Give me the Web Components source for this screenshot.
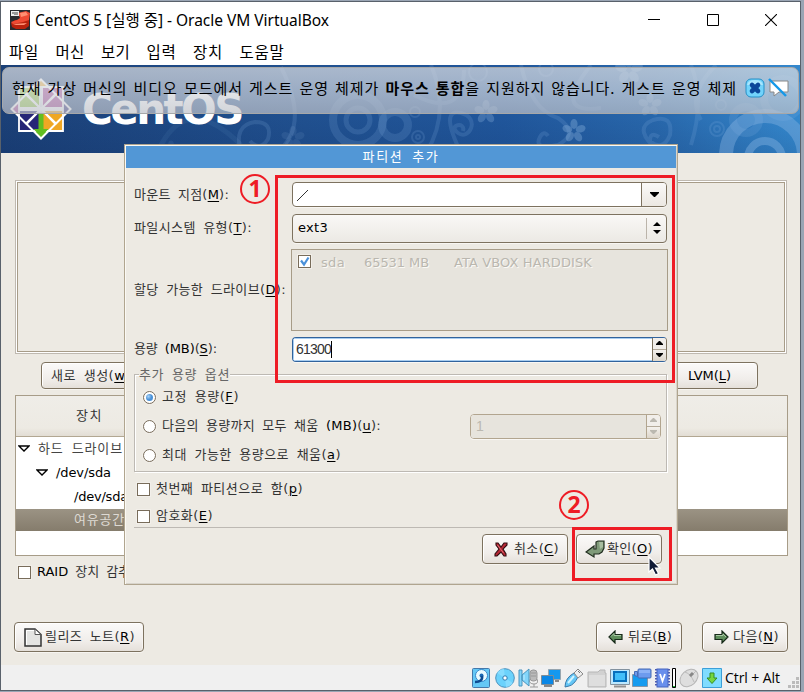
<!DOCTYPE html>
<html lang="ko"><head><meta charset="utf-8"><title>CentOS 5 [실행 중] - Oracle VM VirtualBox</title>
<style>html,body{margin:0;height:692px;overflow:hidden;background:#9aa5b4}body{font-family:"DejaVu Sans","Noto Sans CJK KR",sans-serif;font-size:13px}</style></head><body>
<vm-window></vm-window>
<script>
const define=(name,html,setup)=>customElements.define(name,class extends HTMLElement{
 constructor(){super();this.attachShadow({mode:'open'}).innerHTML=html}
 connectedCallback(){if(setup)setup(this,this.shadowRoot)}
});
/* One line of text whose tracking is adjusted to a given width */
define('fit-text','<style>:host{display:block;white-space:nowrap;line-height:20px;flex:none}span{display:inline-block;word-spacing:var(--ws,3px)}::slotted(u){color:var(--key,#000);text-underline-offset:2px}</style><span><slot></slot></span>',(h,r)=>{
 const w=+h.getAttribute('w'),s=r.querySelector('span');
 if(w){const n=[...h.textContent].length,d=(w-s.getBoundingClientRect().width)/n;s.style.letterSpacing=d+'px';h.style.width=w+'px'}
});
const icons={
 app:[20,20,'<path fill="#292b30" d="M0 0h20v20H0z"/><path fill="#b9220d" d="M1 13l4-3h11l3-1v7l-4 3H6l-4-2z"/><path fill="#ef4b34" d="M8 3l8-2 4 2-1 7-6 2-10 2-2-2 6-2 3-2z"/><path fill="#ff8f72" d="M10 3l6-1 2 3-7 2zM3 14l14-1-3 2H6z"/><path fill="#eee" d="M1 1h8v5H1z"/><path stroke="#444" d="M2 3h2M5 2v3M7 2v3"/>'],
 min:[12,12,'<path stroke="#000" d="M0 5.5h12"/>'],
 max:[12,12,'<path fill="none" stroke="#000" d="M.5.5h11v11H.5z"/>'],
 close:[12,12,'<path stroke="#000" stroke-width="1.1" d="M0 0l12 12M12 0L0 12"/>'],
 cancel:[20,20,'<rect x="1" y="1" width="18" height="18" rx="5" fill="#72d3fb" stroke="#268fc6"/><path d="M2 7Q3 2 10 2t8 5" fill="#c0efff" opacity=".7"/><path stroke="#0b479a" stroke-width="4.6" stroke-linecap="round" d="M7 7l6 6M13 7l-6 6"/>'],
 nobubble:[21,20,'<path fill="#fff" stroke="#888" d="M2 3h18v11h-9l-5 4v-4H2z"/><path stroke="#1598e8" stroke-width="2.4" d="M1 1l17 17"/>'],
 x:[14,15,'<path fill="#b82936" stroke="#320d12" stroke-width="1.1" d="M2 1h2l3 4 3-4h3v2L9 7l3 5v2h-2l-3-4-4 4H1v-2l4-5-3-4z"/><path fill="none" stroke="#e06b75" d="M3.500 3l6 8"/>'],
 ok:[20,19,'<path fill="#809b7a" stroke="#222e20" stroke-width="1.2" d="M11 2l2-1h6v7l-2 4-3 2H9v3L1 12l8-6v3h2z"/><path fill="#a8bda0" d="M14 2h4v5l-3 2z"/>'],
 page:[18,19,'<path fill="#e4e4e2" stroke="#333" stroke-width="1.5" d="M1 1h10l6 5.500V18H1z"/><path fill="#fff" stroke="#555" d="M11 1v5.500h6z"/><path fill="none" stroke="#fff" d="M2.5 17V2.5H10"/>'],
 back:[15,14,'<path fill="#5f8e5c" stroke="#172919" stroke-width="1.2" d="M1 7l6-6v3.5h7v5H7V13z"/><path stroke="#a8c8a3" d="M3 6.5l3-3v2h7"  fill="none"/>'],
 next:[15,14,'<path fill="#5f8e5c" stroke="#172919" stroke-width="1.2" d="M14 7L8 1v3.500H1v5h7V13z"/><path fill="none" stroke="#a8c8a3" d="M2 5.500h7V4l3 3"/>'],
 tri:[12,8,'<path fill="#fff" stroke="#000" stroke-width="1.3" d="M1 1h10L6 6z"/>'],
 down:[9,5,'<path d="M0 0h9v1L5 5H4L0 1z"/>'],
 updown:[8,12,'<path d="M4 0l4 4H0zM0 8h8l-4 4z"/>'],
 up:[7,4,'<path d="M3 0h1l3 3v1H0V3z" fill="currentColor"/>'],
 dn:[7,4,'<path d="M0 0h7v1L4 4H3L0 1z" fill="currentColor"/>'],
 check:[11,11,'<path fill="none" stroke="#4a90d9" stroke-width="2.2" d="M2 4.5L5 8.5 9.5 1.5"/>'],
 hdd:[18,20,'<rect x=".5" y=".5" width="17" height="19" rx="1" fill="#65c8f6" stroke="#4579aa"/><circle cx="9.5" cy="7.5" r="6" fill="#e9faff" stroke="#3388cc"/><circle cx="9.5" cy="7.5" r="2" fill="#1b69b4"/><path stroke="#0e4b91" stroke-width="2.6" fill="none" d="M10 8q1 6-7 6"/>'],
 cd:[20,20,'<circle cx="10" cy="10" r="9.3" fill="#6bd2fc" stroke="#4b91bd"/><path fill="#86dcff" d="M10 10L2 5Q5 1 9 1zM10 10l8 5q-3 4-7 4z"/><circle cx="10" cy="10" r="2.200" fill="#fff" stroke="#2978b0"/>'],
 audio:[20,20,'<rect x="12" y="2" width="7" height="11" rx="3" fill="#bbb" stroke="#999"/><path fill="none" stroke="#999" d="M11 11q0 5 5 5t3-5M16 16v3M12 19h8M13 5h5M13 8h5"/><path fill="#82d5fa" stroke="#4a94bd" d="M1 2h3v16H1zM4 7l7-6v17l-7-6z"/><path stroke="#c1edff" d="M6 7v5"/>'],
 net:[20,20,'<path fill="#1598ef" stroke="#96a5af" d="M7.5 1.5h12v10h-12z"/><path fill="#0a87e6" stroke="#7e8c96" d="M.5 7.500h12v9H.5z"/><path stroke="#888" stroke-width="2" d="M3 18h8M14 13h4"/>'],
 usb:[20,20,'<path fill="#64c6f6" stroke="#3a79a8" d="M1 19q0-9 9-14l4 4q-4 8-9 9z"/><path stroke="#d2f4ff" stroke-width="2" d="M4 15l6-7"/><path fill="#eee" stroke="#888" d="M10 5l4-4 5 5-5 4z"/><path stroke="#777" d="M14 3l2 2"/>'],
 folder:[20,20,'<path fill="#d1d1d1" stroke="#b7b7b7" d="M1 4h10l2-2h5v3h1v14H1z"/><path fill="#dedede" d="M2 7h16v11H2z"/>'],
 display:[20,20,'<path fill="#bce8ff" stroke="#83929e" d="M.5 1.500h19v15H.5z"/><path fill="#42bff9" stroke="#0870bc" stroke-width="2" d="M4 4h12v9H4z"/><path stroke="#929292" stroke-width="2" d="M4 18.500h12"/>'],
 record:[20,20,'<path fill="#159bef" stroke="#8497a8" d="M.5 6.500h15v12H.5z"/><rect x="6" y="1" width="13" height="9" rx="1" fill="#6d9bee" stroke="#476bb4"/><path fill="#8cb2f6" d="M7 2h11v3H7z"/><path fill="#6d9bee" stroke="#476bb4" d="M2.500 3.500h3v5l-3-1z"/>'],
 chip:[15,20,'<path stroke="#4e5bb0" stroke-dasharray="1.500 1.500" d="M1 1v18M14 1v18" stroke-width="2"/><rect x="2" y="1" width="11" height="18" fill="#698fec" stroke="#4764be"/><path fill="none" stroke="#fff" stroke-width="1.800" d="M5 6l2.500 7L10 6"/>'],
 meter:[4,20,'<path fill="#fff" stroke="#000" d="M.5.5h3v19h-3z"/><path fill="#17b833" d="M1 18h2v1H1z"/>'],
 mouse:[20,20,'<ellipse cx="10" cy="10" rx="7.500" ry="10" transform="rotate(48 10 10)" fill="#dedede" stroke="#b5b5b5"/><path fill="none" stroke="#bbb" d="M6 4q6 2 9 10M11 9l6-6"/><path stroke="#888" stroke-width="3" d="M11 8l3-3"/>'],
 host:[20,20,'<path fill="#80dcff" stroke="#3c9fd8" d="M.5.5h19v19H.5z"/><path fill="#75d63e" stroke="#328e23" d="M8 5h4v5h3l-5 5.500L5 10h3z"/>'],
 grip:[11,11,'<path fill="#bbb" d="M8 0h3v3H8zM4 4h3v3H4zM8 4h3v3H8zM0 8h3v3H0zM4 8h3v3H4zM8 8h3v3H8z"/>'],
 cursor:[13,20,'<path fill="#101a35" stroke="#fff" stroke-width="1.200" d="M1 1v15l3.500-3 3 6 3-1.500-3-5.500H12z"/>'],
 logo:[62,62,'<path fill="#efa724" d="M31 1l9 9H22z"/><path fill="#a13a8f" d="M1 31l9-9v18z"/><path fill="#262577" d="M61 31l-9-9v18z"/><path fill="#62be21" d="M31 61l9-9H22z"/><g stroke="#fff" stroke-width="1.800"><path fill="#91c73e" d="M9 9h21v21H9z"/><path fill="#a13a8f" d="M32 9h21v21H32z"/><path fill="#262577" d="M9 32h21v21H9z"/><path fill="#efa724" d="M32 32h21v21H32z"/></g><path fill="#62be21" d="M28.500 35h5v16h5L31 59l-7.500-8h5z"/><path fill="none" stroke="#fff" stroke-width="2" d="M31 1.500L45.500 16 31 31 16.500 16zM31 31l14.500 15L31 60.500 16.500 46zM1.500 31L16 16.500 31 31 16 45.500zM31 31l15-14.500L60.500 31 46 45.500z"/>']
};
define('ui-icon','<style>:host{display:block;flex:none;line-height:0}svg{display:block}</style>',(h,r)=>{const [w,ht,s]=icons[h.getAttribute('name')];r.innerHTML+=`<svg width="${w}" height="${ht}" viewBox="0 0 ${w} ${ht}">${s}</svg>`});
define('gtk-button',`<style>:host{display:flex;box-sizing:border-box;align-items:center;border:1px solid #7d725f;border-radius:4px;background:linear-gradient(#fbfaf9,#f0edea 65%,#e5e0da);box-shadow:inset 1px 1px #fff,inset -1px 0 #f6f4f1,0 1px #f7f5f1;color:#333;height:30px;overflow:hidden;flex:none}</style><slot></slot>`);
define('gtk-toggle',`<style>:host{display:flex;align-items:center;height:20px;gap:6px;color:#333}i{display:flex;align-items:center;justify-content:center;box-sizing:border-box;width:13px;height:13px;border:1px solid #786c5a;background:#fff;flex:none;box-shadow:0 0 0 1px #f2efea}:host([radio]) i{border-radius:50%}:host([radio][on]) i:after{content:"";width:7px;height:7px;border-radius:50%;background:radial-gradient(circle at 35% 35%,#a7d2f7,#4b92d8 50%)}</style><i></i><slot></slot>`,(h,r)=>{if(h.hasAttribute('on')&&!h.hasAttribute('radio'))r.querySelector('i').innerHTML='<ui-icon name="check"></ui-icon>'});
define('gtk-spin',`<style>:host{display:flex;box-sizing:border-box;height:25px;border:1px solid #31639c;border-right-color:#7d725f;border-radius:4px;background:#fff;box-shadow:0 1px #f9f7f4;overflow:hidden}.f{flex:1;display:flex;align-items:center;padding-left:3px;box-shadow:inset 1px 1px #a8cdf0,inset 0 -1px #a8cdf0;font-family:"Liberation Sans",sans-serif;font-size:14px;color:#333}.b{width:13px;border-left:1px solid #7d725f;background:#f1eeea;display:grid;grid-template-rows:1fr 1fr}.b span{display:flex;align-items:center;justify-content:center}.b span+span{border-top:1px solid #b4aa9a;background:linear-gradient(#f4f1ed,#ddd6cb)}:host([off]){border-color:#b2a58f;color:#bbb8b0}:host([off]) .f{background:#e7e4dd;box-shadow:none;color:#bbb8b0}:host([off]) .b{border-color:#b2a58f}</style><div class="f"><slot></slot></div><div class="b"><span><ui-icon name="up"></ui-icon></span><span><ui-icon name="dn"></ui-icon></span></div>`);
define('title-bar',`<style>:host{display:flex;height:36px;align-items:center;background:#fff;padding-left:9px;font:15.500px "Noto Sans","Noto Sans CJK KR",sans-serif;color:#000}fit-text{margin-left:5px;flex:1}nav{display:flex;gap:46.500px;margin-right:23px;align-items:center}</style><ui-icon name="app"></ui-icon><fit-text w="294" style="--ws:0px">CentOS 5 [실행 중] - Oracle VM VirtualBox</fit-text><nav><ui-icon name="min"></ui-icon><ui-icon name="max"></ui-icon><ui-icon name="close"></ui-icon></nav>`,(h,r)=>{r.querySelector('fit-text').style.width='auto'});
define('menu-bar',`<style>:host{display:flex;height:27px;align-items:center;background:#fff;padding:0 8px 2px;box-sizing:border-box;gap:16.500px;font:15.500px "Noto Sans CJK KR",sans-serif;color:#000}</style><fit-text w="30">파일</fit-text><fit-text w="29">머신</fit-text><fit-text w="29">보기</fit-text><fit-text w="30">입력</fit-text><fit-text w="30">장치</fit-text><fit-text w="45">도움말</fit-text>`);
define('distro-banner',`<style>:host{display:block;height:88px;position:relative;overflow:hidden;background:linear-gradient(#0000 60%,#0a205022),linear-gradient(90deg,#1b4077,#20508f 38%,#20569b 63%,#2867ab 82%,#3488cd)}.bg{display:block;position:absolute;inset:0}.brand{position:relative;display:flex;padding:13px 0 0 9px}.brand fit-text{margin:7px 0 0 10px;font:bold 42px/50px "DejaVu Sans",sans-serif;color:#fff;line-height:50px}</style>
<svg class="bg" width="799" height="88" viewBox="0 65 799 88" fill="none" stroke="#8db9e5" stroke-opacity=".17" stroke-width="5">
<g stroke-width="8"><circle cx="357" cy="120" r="25"/><circle cx="357" cy="120" r="12" stroke-width="5"/><circle cx="394" cy="125" r="13"/><circle cx="745" cy="120" r="13"/><circle cx="782" cy="98" r="19"/><circle cx="764" cy="155" r="39" stroke-opacity=".38" stroke-width="14"/><circle cx="764" cy="158" r="17" stroke-opacity=".4"/></g>
<path d="M430 65q20 48-5 88M460 153q-22-45 0-40c20 5 8 28-3 20s8-12 5-2M463 70q-1 50-50 25M520 65q10 45 37 53 22 15 0 27-25 5-18-8 4-7 8-1M660 153q-30-24-8-33 20-6 17 15-7 17-20 6 0-10 9-4M690 65q14 35 0 80M715 65q-30 30-15 55M280 67q30 60-5 86M240 153q-8-28 14-31 18 0 13 17-8 13-18 2M590 65q-40 50 10 43" stroke-width="4"/><path d="M160 145q28-52 80 0" stroke-opacity=".08"/><g stroke-width="2"><circle cx="417" cy="137" r="6"/><circle cx="417" cy="137" r="2"/><circle cx="716" cy="129" r="7"/><circle cx="716" cy="129" r="3"/><circle cx="414" cy="112" r="5"/><circle cx="720" cy="105" r="5"/><circle cx="477" cy="72" r="9"/><circle cx="545" cy="69" r="7"/></g>
<g fill="#a3c7ec" stroke="none" id="fl"></g></svg><div class="brand"><ui-icon name="logo"></ui-icon><fit-text w="160" style="--ws:0px">CentOS</fit-text></div>`,(h,r)=>{
 let s='';for(const[x,y,k,o]of[[573,131,1,.3],[485,112,1,.25],[649,105,1,.25],[628,70,1.2,.25],[292,138,1,.1],[170,150,.8,.08]])for(let i=0;i<5;i++)s+=`<ellipse cx="${x}" cy="${y-7*k}" rx="${3.600*k}" ry="${5*k}" fill-opacity="${o}" transform="rotate(${i*72} ${x} ${y})"/>`;r.querySelector('#fl').innerHTML=s});
define('vm-notice',`<style>:host{position:absolute;left:1px;top:2px;width:797px;height:47px;box-sizing:border-box;border:1px solid #a7a8a9;border-radius:7px;background:linear-gradient(#d9dce1bd,#d3d6dcae 55%,#bfc2c9b3);display:flex;align-items:center;padding:0 11px 5px 9px;color:#000;font:15px "Noto Sans CJK KR",sans-serif;--ws:1px}ui-icon{margin-left:8px}ui-icon+ui-icon{margin-left:3px}</style><fit-text w="725">현재 가상 머신의 비디오 모드에서 게스트 운영 체제가 <b>마우스 통합</b>을 지원하지 않습니다. 게스트 운영 체제</fit-text><ui-icon name="cancel"></ui-icon><ui-icon name="nobubble"></ui-icon>`);
define('partition-table',`<style>:host{display:block;box-sizing:border-box;height:161px;border:1px solid #a79c88;background:#fff;color:#000}.h{height:40px;border-bottom:1px solid #b2a792;background:linear-gradient(#efede8,#edeae3 80%,#e2ddd4);display:flex;align-items:center;padding-left:60px;color:#333}.r{display:flex;align-items:center;height:24px;gap:8px;padding-left:2px}.r1{padding-left:20px}.r2{padding-left:58px}.s{height:22px;padding-left:58px;background:linear-gradient(#9b9384,#857c6c);color:#dedad3}</style><div class="h"><fit-text w="27">장치</fit-text></div><div class="r" style="color:#444"><ui-icon name="tri"></ui-icon><fit-text w="85">하드 드라이브</fit-text></div><div class="r r1"><ui-icon name="tri"></ui-icon><fit-text w="55" style="--ws:0px">/dev/sda</fit-text></div><div class="r r2"><fit-text w="62">/dev/sda1</fit-text></div><div class="r s"><fit-text w="51">여유공간</fit-text></div>`);
define('installer-page',`<style>:host{display:block;padding:27px 11px 0 14px;height:484px}.canvas{height:174px;box-sizing:border-box;border:1px solid #bfb9b0;padding:1px;box-shadow:inset 0 0 0 1px #fff;width:772px}.canvas:before{content:"";display:block;height:170px;box-sizing:border-box;border:1px solid #a79c88}.row{display:flex;justify-content:space-between;margin:8px 31px 6px 26px}.row gtk-button{height:27px;padding-left:9px;box-sizing:border-box}partition-table{width:773px}.foot{display:flex;margin:40px 0 0 -1px}.foot gtk-button{width:86px;padding-left:10px}gtk-toggle{margin:6px 0 0 3px}</style>
<div class="canvas"></div><div class="row"><gtk-button style="width:96px"><fit-text w="80">새로 생성(<u>w</u>)</fit-text></gtk-button><gtk-button style="width:98px;padding-left:27px;color:#000"><fit-text w="43">LVM(<u>L</u>)</fit-text></gtk-button></div><partition-table></partition-table><gtk-toggle><fit-text w="105"><span style="color:#000">RAID</span> 장치 감추기</fit-text></gtk-toggle><div class="foot"><gtk-button style="width:130px;padding-left:9px;gap:3px;margin-right:452px"><ui-icon name="page"></ui-icon><fit-text w="90">릴리즈 노트(<u>R</u>)</fit-text></gtk-button><gtk-button style="gap:5px;padding-left:11px;margin-right:20px"><ui-icon name="back"></ui-icon><fit-text w="44">뒤로(<u>B</u>)</fit-text></gtk-button><gtk-button style="gap:4px;padding-left:11px"><ui-icon name="next"></ui-icon><fit-text w="46">다음(<u>N</u>)</fit-text></gtk-button></div>`);
define('partition-dialog',`<style>:host{position:absolute;left:123px;top:79px;width:554px;height:441px;box-sizing:border-box;border:1px solid #b0a58f;background:#edeae3;box-shadow:inset 1px 1px #fbf9f4,inset -1px -1px #d8d4cb;color:#333}header{height:22px;margin:1px;background:#5297d6;color:#fff;display:flex;align-items:center;justify-content:center}.form{display:grid;grid-template-columns:157px 377px;grid-template-rows:25px 29px 82px 25px;row-gap:6px;padding:13px 0 0 9px;align-items:center}.form>*{box-sizing:border-box}.combo{display:flex;margin:0 1px;border:1px solid #7d725f;border-radius:4px;height:25px;background:#fff;box-shadow:0 1px #f8f6f2;overflow:hidden;align-items:center;padding-left:3px;justify-content:space-between}.arrow{align-self:stretch;width:24px;border-left:1px solid #7d725f;background:linear-gradient(#faf9f7,#ece8e2);display:flex;align-items:center;justify-content:center}.menu{height:29px;margin-top:1px;background:linear-gradient(#f9f8f6,#ece9e4);padding-left:5px;color:#000}.menu .arrow{width:19px;border-color:#bbb4aa;background:none;margin:3px 0}.list{height:82px;margin-top:1px;border:1px solid #a79c88;background:#e7e4dd;display:flex;padding:2px 6px;color:#bab7af;text-shadow:1px 1px #faf9f5;align-items:flex-start}.list fit-text{--ws:0px;padding-top:1px}.caret{width:1px;height:17px;background:#000}.opt{height:98px;width:533px;margin:13px 0 0 9px;border:1px solid #bdb9b3;box-shadow:inset 1px 1px #fff,1px 1px #fff;box-sizing:border-box;padding-left:8px}.opt .leg{margin:-10px 0 0 -4px;background:#edeae3;color:#666;display:block}.opt .line{display:flex;justify-content:space-between;height:26px;margin:6px 5px 0 0;align-items:center}.opt>gtk-toggle{margin-top:2px}.checks{margin:7px 0 0 12px;display:grid;gap:7px}.sep{margin:1px 10px 0 9px;border-top:1px solid #bdb9b3;height:6px}.buttons{display:flex;justify-content:flex-end;gap:8px;padding-right:15px}.buttons gtk-button{width:86px}</style>
<header><fit-text w="77">파티션 추가</fit-text></header><div class="form"><fit-text w="95">마운트 지점(<u>M</u>):</fit-text><div class="combo"><svg width="13" height="14"><path d="M1 13L12 2" stroke="#333"/></svg><span class="arrow"><ui-icon name="down"></ui-icon></span></div>
<fit-text w="118" style="padding-top:1px">파일시스템 유형(<u>T</u>):</fit-text><div class="combo menu"><fit-text w="30">ext3</fit-text><span class="arrow"><ui-icon name="updown"></ui-icon></span></div>
<fit-text w="152" style="padding-top:1px">할당 가능한 드라이브(<u>D</u>):</fit-text><div class="list"><gtk-toggle on></gtk-toggle><fit-text w="24" style="margin-left:10px">sda</fit-text><fit-text w="65" style="margin-left:19px">65531 MB</fit-text><fit-text w="138" style="margin-left:25px">ATA VBOX HARDDISK</fit-text></div>
<fit-text w="83" style="padding-top:1px">용량 <span style="color:#000">(MB)</span>(<u>S</u>):</fit-text><gtk-spin style="margin:1px 1px 0;color:#000"><fit-text w="35">61300</fit-text><span class="caret"></span></gtk-spin></div>
<div class="opt"><fit-text class="leg" w="91">추가 용량 옵션</fit-text><gtk-toggle radio on><fit-text w="77">고정 용량(<u>F</u>)</fit-text></gtk-toggle><div class="line"><gtk-toggle radio><fit-text w="219">다음의 용량까지 모두 채움 <span style="color:#000">(MB)</span>(<u>u</u>):</fit-text></gtk-toggle><gtk-spin off style="width:191px"><fit-text style="margin-left:2px">1</fit-text></gtk-spin></div><gtk-toggle radio style="margin-top:6px"><fit-text w="179">최대 가능한 용량으로 채움(<u>a</u>)</fit-text></gtk-toggle></div>
<div class="checks"><gtk-toggle><fit-text w="147">첫번째 파티션으로 함(<u>p</u>)</fit-text></gtk-toggle><gtk-toggle><fit-text w="57">암호화(<u>E</u>)</fit-text></gtk-toggle></div><div class="sep"></div><div class="buttons"><gtk-button style="padding-left:11px;gap:6px"><ui-icon name="x"></ui-icon><fit-text w="45">취소(<u>C</u>)</fit-text></gtk-button><gtk-button style="padding-left:8px;gap:2px"><ui-icon name="ok"></ui-icon><fit-text w="46">확인(<u>O</u>)</fit-text></gtk-button></div>`);
/* Numbered call-outs laid over the guest screen */
define('step-marks',`<style>:host{position:absolute;inset:0}.b,.n{position:absolute;box-sizing:border-box;border:3px solid #ee1c25}.n{width:30px;height:30px;border-width:2px;border-radius:50%;color:#ee1c25;font:bold 23px/25px "Open Sans",sans-serif;text-align:center}ui-icon{position:absolute;left:647px;top:491px}</style><div class="b" style="left:274px;top:110px;width:400px;height:208px"></div><div class="n" style="left:239px;top:109px">1</div><div class="b" style="left:571px;top:462px;width:100px;height:54px"></div><div class="n" style="left:558px;top:425px">2</div><ui-icon name="cursor"></ui-icon>`);
define('status-bar',`<style>:host{display:flex;height:25px;background:#f0f0f0;align-items:center;padding:0 1px 0 471px;gap:3px;font:14px "Open Sans",sans-serif;color:#000;box-sizing:border-box}ui-icon[name=grip]{align-self:flex-end;margin:0 0 2px auto}</style>${['hdd','cd','audio','net','usb','folder','display','record','chip','meter','mouse','host'].map(n=>`<ui-icon name="${n}"${n=='cd'?' style="margin-left:2px"':n=='record'?' style="margin-left:-1px"':n=='meter'?' style="margin-left:-1px"':''}></ui-icon>`).join('')}<fit-text w="55" style="--ws:0px">Ctrl + Alt</fit-text><ui-icon name="grip"></ui-icon>`);
define('vm-window',`<style>:host{display:block;box-sizing:border-box;width:801px;height:690px;margin-top:1px;border:1px solid #59616b;background:#edeae3}main{height:600px;position:relative;background:#edeae3}</style><title-bar></title-bar><menu-bar></menu-bar><main><distro-banner></distro-banner><installer-page></installer-page><vm-notice></vm-notice><partition-dialog></partition-dialog><step-marks></step-marks></main><status-bar></status-bar>`);
</script></body></html>
